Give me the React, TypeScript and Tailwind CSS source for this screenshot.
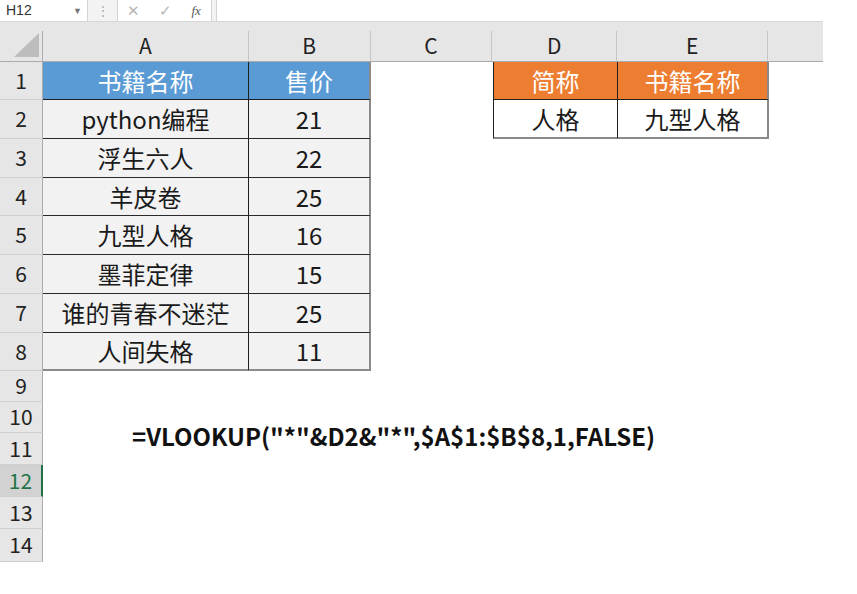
import React from 'react';

const cols = [
  { key: 'A', w: 'w-[206px]' },
  { key: 'B', w: 'w-[122px]' },
  { key: 'C', w: 'w-[122px]' },
  { key: 'D', w: 'w-[125px]' },
  { key: 'E', w: 'w-[151px]' },
  { key: '', w: 'w-[55px]' },
];

const rowHeights = [
  'h-[38px]', 'h-[39px]', 'h-[39px]', 'h-[38px]', 'h-[39px]', 'h-[39px]', 'h-[39px]', 'h-[38px]',
  'h-[31px]', 'h-[31px]', 'h-[32px]', 'h-[32px]', 'h-[32px]', 'h-[33px]',
];

const books: [string, string][] = [
  ['python编程', '21'],
  ['浮生六人', '22'],
  ['羊皮卷', '25'],
  ['九型人格', '16'],
  ['墨菲定律', '15'],
  ['谁的青春不迷茫', '25'],
  ['人间失格', '11'],
];

const cjk = "font-['Noto_Sans_CJK_SC',sans-serif]";

function FormulaBar() {
  return (
    <div className="flex h-[22px] bg-[#f3f3f3] border-b border-[#d6d6d6]">
      <div className="flex w-[88px] items-center justify-between bg-white pl-[6px] pr-[5px] border-r border-[#d4d4d4]">
        <span className="text-[14px] text-[#333] font-['Liberation_Sans',sans-serif]">H12</span>
        <span className="text-[9px] text-[#777]">▼</span>
      </div>
      <div className="flex w-[29px] items-center justify-center text-[12px] text-[#aaa]">⋮</div>
      <div className="flex w-[95px] items-center bg-white border-x border-[#d4d4d4]">
        <span className="w-[32px] text-center text-[15px] text-[#b5b5b5]">✕</span>
        <span className="w-[32px] text-center text-[15px] text-[#b5b5b5]">✓</span>
        <span className="w-[30px] text-center text-[13px] italic text-[#555] font-['Liberation_Serif',serif]">fx</span>
      </div>
      <div className="ml-[4px] flex-1 bg-white border-l border-[#d4d4d4]" />
    </div>
  );
}

function ColumnHeader() {
  return (
    <div className="flex h-[40px] bg-[#e6e6e6] border-b border-[#ababab]">
      <div className="relative w-[43px] border-r border-[#ababab] mt-[9px]">
        <svg className="absolute right-[3px] bottom-[4px]" width="25" height="24" viewBox="0 0 25 24">
          <polygon points="25,0 25,24 0,24" fill="#bdbdbd" />
        </svg>
      </div>
      {cols.map((c, i) => (
        <div
          key={i}
          className={`${c.w} mt-[9px] flex items-center justify-center text-[21px] text-[#222] ${cjk} ${i < cols.length - 1 ? 'border-r border-[#c6c6c6]' : ''}`}
        >
          {c.key}
        </div>
      ))}
    </div>
  );
}

function RowHead({ n }: { n: number }) {
  const selected = n === 12;
  return (
    <div
      className={`flex w-[43px] shrink-0 items-center justify-center text-[21px] border-b border-[#cfcfcf] ${cjk} ${
        selected ? 'bg-[#d2d2d2] text-[#217346] border-r-2 border-r-[#217346]' : 'bg-[#e6e6e6] text-[#222] border-r border-r-[#ababab]'
      }`}
    >
      {n}
    </div>
  );
}

function Cell({ w, className = '', children }: { w: string; className?: string; children?: React.ReactNode }) {
  return (
    <div className={`${w} shrink-0 flex items-center justify-center text-[24px] ${cjk} ${className}`}>{children}</div>
  );
}

export default function App() {
  return (
    <div className="w-[857px] h-[594px] bg-white overflow-hidden">
      <div className="w-[823px]">
        <FormulaBar />
        <ColumnHeader />
        {rowHeights.map((h, idx) => {
          const n = idx + 1;
          let a: React.ReactNode = null;
          let b: React.ReactNode = null;
          let d: React.ReactNode = null;
          let e: React.ReactNode = null;
          if (n === 1) {
            a = <Cell w="w-[206px]" className="bg-[#5b9bd5] text-white border-r border-b border-[#1e1e1e]">书籍名称</Cell>;
            b = <Cell w="w-[122px]" className="bg-[#5b9bd5] text-white border-r-2 border-r-[#8a8a8a] border-b border-b-[#1e1e1e]">售价</Cell>;
            d = <Cell w="w-[125px]" className="bg-[#ed7d31] text-white border-l border-r border-b border-[#1e1e1e]">简称</Cell>;
            e = <Cell w="w-[151px]" className="bg-[#ed7d31] text-white border-r-2 border-r-[#8a8a8a] border-b border-b-[#1e1e1e]">书籍名称</Cell>;
          } else if (n <= 8) {
            const [name, price] = books[n - 2];
            const last = n === 8;
            const bb = last ? 'border-b-2 border-b-[#8a8a8a]' : 'border-b border-b-[#2a2a2a]';
            a = <Cell w="w-[206px]" className={`bg-[#f2f2f2] text-[#1a1a1a] border-r border-r-[#1e1e1e] ${bb}`}>{name}</Cell>;
            b = <Cell w="w-[122px]" className={`bg-[#f2f2f2] text-[#1a1a1a] border-r-2 border-r-[#8a8a8a] ${bb}`}>{price}</Cell>;
          }
          if (n === 2) {
            d = <Cell w="w-[125px]" className="bg-white text-[#1a1a1a] border-l border-l-[#1e1e1e] border-r border-r-[#1e1e1e] border-b-2 border-b-[#8a8a8a]">人格</Cell>;
            e = <Cell w="w-[151px]" className="bg-white text-[#1a1a1a] border-r-2 border-r-[#8a8a8a] border-b-2 border-b-[#8a8a8a]">九型人格</Cell>;
          }
          if (n === 10) {
            return (
              <div key={n} className={`flex ${h} relative`}>
                <RowHead n={n} />
                <div className="flex-1" />
                <div className="absolute left-[132px] top-[22px] text-[24px] leading-none font-bold text-[#111] font-['Noto_Sans_CJK_SC',sans-serif] whitespace-nowrap">
                  =VLOOKUP("*"&amp;D2&amp;"*",$A$1:$B$8,1,FALSE)
                </div>
              </div>
            );
          }
          return (
            <div key={n} className={`flex ${h}`}>
              <RowHead n={n} />
              {a ?? <Cell w="w-[206px]" />}
              {b ?? <Cell w="w-[122px]" />}
              <Cell w="w-[122px]" />
              {d ?? <Cell w="w-[125px]" />}
              {e ?? <Cell w="w-[151px]" />}
              <Cell w="w-[55px]" />
            </div>
          );
        })}
      </div>
    </div>
  );
}
